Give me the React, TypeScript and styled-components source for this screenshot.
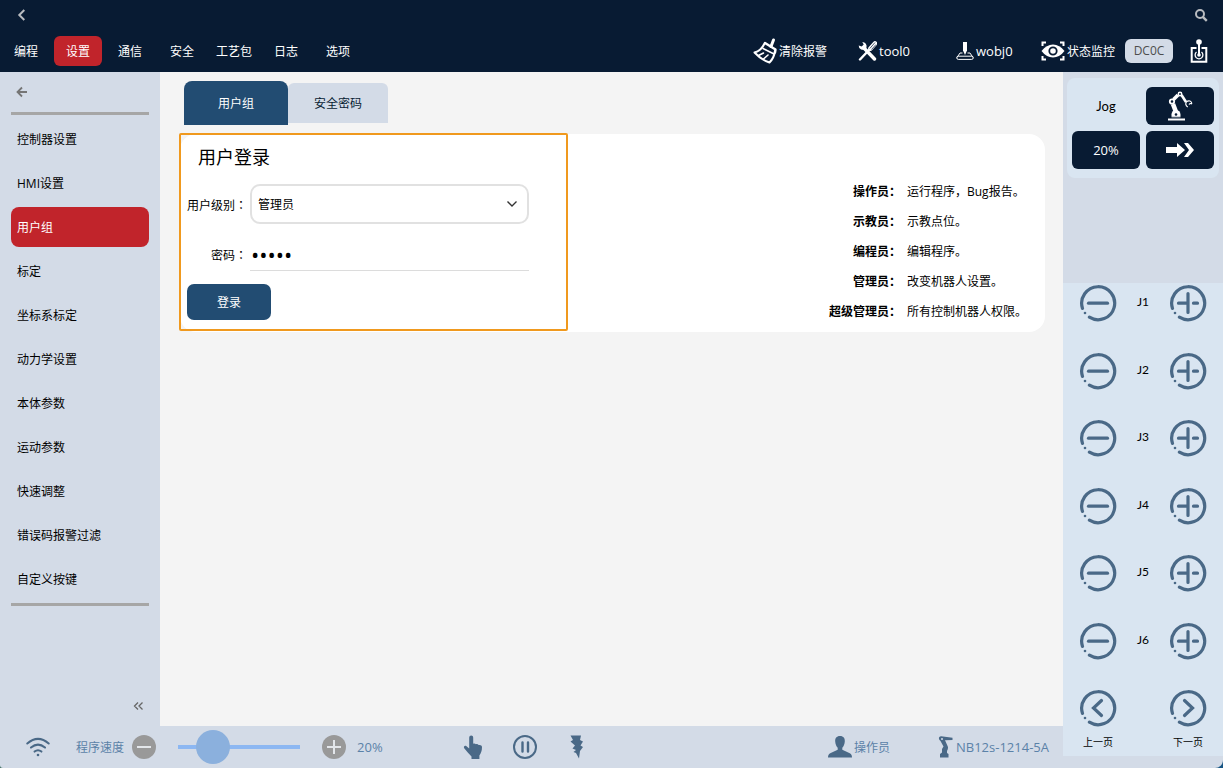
import React, { useState } from 'react';
import styled, { createGlobalStyle } from 'styled-components';

const c = {
  navy: '#081b33',
  red: '#c1242b',
  panel: '#d3dbe7',
  page: '#f4f4f4',
  light: '#d9e5f1',
  blue: '#224c72',
  icon: '#4a6987',
  soft: '#5b82a8',
  rule: '#a6a6a6',
};

const GlobalStyle = createGlobalStyle`
  *, *::before, *::after { box-sizing: border-box; }
  body {
    margin: 0;
    background: linear-gradient(90deg, #3f6f62, #175583 50%);
    font-family: "Open Sans", "Noto Sans CJK SC", sans-serif;
    font-size: 12px;
    line-height: 16px;
    color: #000;
  }
  button, input, select { font: inherit; color: inherit; margin: 0; }
  button { border: 0; padding: 0; background: none; cursor: pointer; }
  svg { display: block; flex: none; }
`;

const Shell = styled.div`
  display: flex;
  flex-direction: column;
  min-height: 100vh;
  background: ${c.panel};
  border-radius: 0 0 8px 3px;
  overflow: hidden;
`;

const Header = styled.header`
  background: ${c.navy};
  color: #fff;
  height: 72px;
`;

const TitleBar = styled.div`
  display: flex;
  justify-content: space-between;
  align-items: center;
  height: 30px;
  padding: 0 15px;
  color: #b9bcc0;
`;

const MenuBar = styled.div`
  display: flex;
  justify-content: space-between;
  align-items: center;
  height: 42px;
  padding: 0 14px 0 2px;
`;

const Menu = styled.nav`
  display: flex;
  gap: 4px;
`;

const MenuButton = styled.button<{ $active?: boolean }>`
  width: 48px;
  height: 30px;
  padding-top: 2px;
  border-radius: 6px;
  white-space: nowrap;
  background: ${p => (p.$active ? c.red : 'transparent')};
`;

const Tools = styled.div`
  display: flex;
  align-items: center;
`;

const ToolGrid = styled.div`
  display: grid;
  grid-template-columns: 105px 98px 85px 84px;
`;

const Tool = styled.button`
  display: flex;
  align-items: center;
  gap: 2px;
  height: 30px;
  white-space: nowrap;
`;

const Latin = styled.span`
  font-size: 13px;
`;

const Hanzi = styled.span`
  padding-top: 2px;
`;

const CodeButton = styled.button`
  width: 48px;
  height: 24px;
  margin-right: 16px;
  border-radius: 6px;
  background: ${c.panel};
  color: #4d4d4d;
`;

const Body = styled.div`
  display: flex;
  flex: 1;
`;

const Workspace = styled.div`
  display: flex;
  flex-direction: column;
  flex: 1;
  min-width: 0;
`;

const Columns = styled.div`
  display: flex;
  flex: 1;
`;

const Sidebar = styled.aside`
  display: flex;
  flex-direction: column;
  width: 160px;
  padding: 0 11px;
`;

const BackButton = styled.button`
  display: flex;
  align-items: center;
  height: 40px;
  padding-left: 5px;
  color: #757575;
`;

const SideList = styled.nav`
  display: flex;
  flex-direction: column;
  gap: 4px;
  padding: 4px 0;
  border-top: 3px solid ${c.rule};
  border-bottom: 3px solid ${c.rule};
`;

const SideItem = styled.button<{ $active?: boolean }>`
  height: 40px;
  padding: 2px 6px 0;
  border-radius: 8px;
  text-align: left;
  background: ${p => (p.$active ? c.red : 'transparent')};
  color: ${p => (p.$active ? '#fff' : '#000')};
`;

const CollapseButton = styled.button`
  align-self: flex-end;
  margin: auto 5px 15px 0;
  color: #666;
`;

const Main = styled.main`
  flex: 1;
  min-width: 0;
  padding: 9px 18px 0 20px;
  background: ${c.page};
`;

const Tabs = styled.div`
  display: flex;
  align-items: center;
  padding-left: 4px;
  margin-bottom: 9px;
`;

const Tab = styled.button<{ $active?: boolean }>`
  width: ${p => (p.$active ? 104 : 100)}px;
  height: ${p => (p.$active ? 44 : 40)}px;
  padding-top: 2px;
  border-radius: ${p => (p.$active ? '8px 8px 0 0' : '6px 6px 0 0')};
  background: ${p => (p.$active ? c.blue : c.panel)};
  color: ${p => (p.$active ? '#fff' : c.navy)};
`;

const Card = styled.section`
  display: flex;
  justify-content: space-between;
  height: 198px;
  border-radius: 16px;
  background: #fff;
`;

const LoginForm = styled.form`
  width: 389px;
  margin: -1px 0 1px -1px;
  padding: 10px 6px;
  border: 2px solid #f0991e;
  border-radius: 2px;
`;

const FormTitle = styled.h1`
  margin: 0 0 15px 11px;
  font-size: 18px;
  line-height: 24px;
  font-weight: 400;
`;

const Field = styled.div`
  display: grid;
  grid-template-columns: 60px 279px;
  column-gap: 3px;
  align-items: center;
  margin-bottom: 13px;
`;

const FieldLabel = styled.label`
  padding-top: 2px;
  text-align: right;
  white-space: nowrap;
`;

const Colon = styled.span`
  font-family: "Noto Sans CJK TC", sans-serif;
`;

const SelectBox = styled.div`
  display: grid;
  align-items: center;
  > * { grid-area: 1 / 1; }
  > svg { justify-self: end; margin-right: 10px; pointer-events: none; }
`;

const Select = styled.select`
  width: 100%;
  height: 40px;
  padding: 2px 6px 0;
  border: 2px solid #e1e1e1;
  border-radius: 10px;
  background: #fff;
  appearance: none;
`;

const Password = styled.input`
  width: 100%;
  height: 34px;
  padding: 0 1px;
  border: 0;
  border-bottom: 1px solid #dcdcdc;
  border-radius: 0;
  outline: 0;
  font-family: "Open Sans", sans-serif;
  font-size: 22px;
`;

const LoginButton = styled.button`
  width: 84px;
  height: 36px;
  padding-top: 2px;
  border-radius: 7px;
  background: ${c.blue};
  color: #fff;
`;

const Roles = styled.dl`
  display: grid;
  grid-template-columns: auto 120px;
  grid-auto-rows: 30px;
  column-gap: 6px;
  align-items: center;
  align-content: start;
  margin: 0;
  padding: 43px 18px 0 0;
  white-space: nowrap;
`;

const RoleName = styled.dt`
  font-weight: 700;
  text-align: right;
`;

const RoleText = styled.dd`
  margin: 0;
`;

const Footer = styled.footer`
  display: flex;
  align-items: center;
  height: 42px;
  padding: 0 14px 0 26px;
  color: ${c.soft};
  white-space: nowrap;
`;

const Speed = styled.div`
  display: flex;
  align-items: center;
`;

const SpeedLabel = styled.label`
  margin: 0 8px 0 26px;
  padding-top: 2px;
`;

const RoundButton = styled.button`
  display: flex;
  align-items: center;
  justify-content: center;
  width: 24px;
  height: 24px;
  border-radius: 50%;
  background: #999;
`;

const Slider = styled.input`
  width: 122px;
  height: 34px;
  margin: 0 22px;
  appearance: none;
  background: transparent;
  &::-webkit-slider-runnable-track {
    height: 4px;
    background: #8cb7f2;
  }
  &::-webkit-slider-thumb {
    appearance: none;
    width: 34px;
    height: 34px;
    margin-top: -15px;
    border-radius: 50%;
    background: #8bb0dd;
  }
`;

const SpeedValue = styled.output`
  margin-left: 11px;
  width: 25px;
  font-size: 13px;
`;

const Modes = styled.div`
  display: flex;
  align-items: center;
  gap: 30px;
  margin-left: 81px;
`;

const Status = styled.div`
  display: flex;
  align-items: center;
  gap: 48px;
  margin-left: auto;
`;

const StatusItem = styled.span`
  display: flex;
  align-items: center;
  gap: 2px;
`;

const JogPanel = styled.aside`
  display: flex;
  flex-direction: column;
  width: 160px;
  padding: 6px 0 12px;
`;

const JogCard = styled.div`
  display: grid;
  grid-template-columns: 1fr 1fr;
  grid-auto-rows: 38px;
  gap: 6px;
  margin: 0 4px 105px;
  padding: 9px 5px;
  border-radius: 8px;
  background: ${c.light};
`;

const JogTitle = styled.div`
  display: flex;
  align-items: center;
  justify-content: center;
  font-family: Lato, sans-serif;
  font-size: 13px;
`;

const JogButton = styled.button`
  display: flex;
  align-items: center;
  justify-content: center;
  border-radius: 6px;
  background: ${c.navy};
  color: #fff;
  font-size: 13px;
`;

const Joints = styled.div`
  display: flex;
  flex: 1;
  flex-direction: column;
  justify-content: space-between;
  padding: 1px 16px 6px;
  background: ${c.light};
`;

const Joint = styled.div`
  display: flex;
  justify-content: space-between;
  align-items: center;
`;

const JointName = styled.span`
  padding-bottom: 2px;
  font-family: Lato, sans-serif;
  font-size: 12px;
`;

const PageButton = styled.button`
  display: flex;
  flex-direction: column;
  align-items: center;
  gap: 7px;
  width: 38px;
  font-size: 10px;
  line-height: 16px;
  white-space: nowrap;
`;

const Ring = ({ d }: { d: string }) => (
  <svg width="38" height="38" viewBox="0 0 38 38" fill="none" stroke={c.icon} strokeWidth="3.2" strokeLinecap="round">
    <path d="M10.4 33.2A16.5 16.5 0 1 0 3.5 24.4" />
    <circle cx="6" cy="29" r="1.3" fill={c.icon} stroke="none" />
    <path d={d} />
  </svg>
);

const MINUS = 'M9.5 19.2h19';
const PLUS = 'M19 9.5v19M9.5 19.2h8M24.5 19.2h4';

const Chevron = () => (
  <svg width="14" height="14" viewBox="0 0 14 14" fill="none" stroke="currentColor" strokeWidth="2">
    <path d="M9.3 2L4.3 7l5 5" />
  </svg>
);

const SearchIcon = () => (
  <svg width="14" height="14" viewBox="0 0 14 14" fill="none" stroke="currentColor" strokeWidth="2">
    <circle cx="6" cy="6" r="4" />
    <path d="M8.8 8.8l4 4" strokeWidth="2.4" />
  </svg>
);

const BroomIcon = () => (
  <svg width="24" height="26" viewBox="0 0 24 26" fill="none" stroke="#fff" strokeWidth="2" strokeLinejoin="round" strokeLinecap="round">
    <path d="M20.5 2l-2.5 6.5" strokeWidth="3" />
    <path d="M12 5l10.5 6.5-.5 3" strokeWidth="2.4" />
    <path d="M11.5 5.5Q8 13 1.5 14.5Q8 21.5 16.5 24.5Q21 20 22 13" />
    <path d="M10 10.5l11 5.5" strokeWidth="1.6" />
    <path d="M5.5 17.5l5-2.5M10.5 21l4.5-4" strokeWidth="1.6" />
  </svg>
);

const ToolsIcon = () => (
  <svg width="19" height="20" viewBox="0 0 19 20" fill="none" stroke="#fff">
    <path d="M5.5 6.5l11 11.5" strokeWidth="3.4" strokeLinecap="round" />
    <path d="M.7 4.5a4.2 4.2 0 0 0 6.4 3.7l1.300-1.500A4.300 4.300 0 0 0 4.300 1l1.400 2.500-2 2z" fill="#fff" stroke="none" />
    <path d="M11 9L2 18.500" strokeWidth="2.4" strokeLinecap="round" />
    <path d="M12.5 7.5L17 2.5" strokeWidth="4.6" strokeLinecap="round" />
    <path d="M11.8 7.5L17 1.5M13.5 8.5L18 3.5" stroke={c.navy} strokeWidth=".7" />
  </svg>
);

const WobjIcon = () => (
  <svg width="18" height="20" viewBox="0 0 18 20" fill="none" stroke="#fff">
    <path d="M7 1h4v8.500L9 14 7 9.500z" fill="#fff" stroke="none" />
    <path d="M6.5 12H4L1 16.500M11.500 12H14L17 16.500" strokeWidth="1" />
    <rect x=".8" y="15.2" width="16.4" height="3.2" rx="1.5" strokeWidth="1" />
  </svg>
);

const EyeIcon = () => (
  <svg width="24" height="20" viewBox="0 0 24 20" fill="none" stroke="#fff" strokeWidth="2">
    <path d="M5 1.5H1.5V5M19 1.5h3.5V5M5 18.5H1.5V15M19 18.5h3.5V15" />
    <path d="M.5 10Q5.5 3.500 12 3.500T23.500 10Q18.500 16.500 12 16.500T.5 10z" fill="#fff" stroke="none" />
    <circle cx="12" cy="10" r="3.7" stroke={c.navy} strokeWidth="1.8" />
  </svg>
);

const JoystickIcon = () => (
  <svg width="20" height="26" viewBox="0 0 20 26" fill="none" stroke="#fff">
    <path d="M7.5 10H2.700v13.800h14.600V10h-4.800" strokeWidth="2" />
    <circle cx="10" cy="4" r="2.8" fill="#fff" stroke="none" />
    <path d="M10 4v13" strokeWidth="2" />
    <path d="M7.5 14a3.900 3.900 0 1 0 5 0" strokeWidth="1.3" />
    <circle cx="10" cy="17" r="1.8" fill="#fff" stroke="none" />
  </svg>
);

const RobotIcon = () => (
  <svg width="26" height="30" viewBox="0 0 26 30" fill="none" stroke="#fff">
    <path d="M1 28.5h17" strokeWidth="2" />
    <path d="M4.5 26.5v-3a4.5 4.5 0 0 1 9 0v3z" fill="#fff" stroke="none" />
    <path d="M8.8 20.5L6 13" strokeWidth="4.6" />
    <path d="M6.5 8.5L11 4" strokeWidth="3.6" />
    <path d="M14.5 4l4.5 7" strokeWidth="2.6" />
    <circle cx="5" cy="10.5" r="2.2" fill={c.navy} strokeWidth="1.8" />
    <circle cx="13" cy="3" r="1.7" fill={c.navy} strokeWidth="1.5" />
    <path d="M24.8 12.5c-.2-2.500-3-3.500-5-2-1.800 1.500-1.200 4.500 1 5.500M22 13.500c.5-1.200 2-1.200 3-.5" strokeWidth="1.2" />
    <circle cx="9" cy="23.5" r="1.3" fill={c.navy} stroke="none" />
    <path d="M3.5 26.2h11" stroke={c.navy} strokeWidth=".6" />
  </svg>
);

const FastIcon = () => (
  <svg width="28" height="16" viewBox="0 0 28 16" fill="#fff">
    <path d="M0 5h11V1l8 7-8 7v-4H0z" />
    <path d="M18 1h4l6 7-6 7h-4l5-7z" />
  </svg>
);

const WifiIcon = () => (
  <svg width="24" height="20" viewBox="0 0 24 20" fill="none" stroke={c.icon} strokeWidth="2" strokeLinecap="round">
    <path d="M1.3 6.5Q12-2.8 22.7 6.5M5 10.6q7-6 14 0M8.6 14.6q3.4-2.8 6.800 0" />
    <circle cx="12" cy="18" r="1.3" fill={c.icon} stroke="none" />
  </svg>
);

const HandIcon = () => (
  <svg width="20" height="24" viewBox="0 0 20 24" fill={c.icon}>
    <path d="M6.2 2.5a2 2 0 0 1 4 0v6.200c1-.5 2.200-.2 2.700.6 1-.5 2.200-.1 2.700.8 1.600-.6 3.400.3 3.400 2 0 4-1 6-2.600 8.400V24H8.500v-2.500C6 19 3.500 16 1.200 13.200c-1-1.500.6-3 2-2.200l3 2.500z" />
  </svg>
);

const PauseIcon = () => (
  <svg width="24" height="24" viewBox="0 0 24 24" fill="none" stroke={c.icon} strokeWidth="2">
    <circle cx="12" cy="12" r="11" />
    <path d="M9.5 7.5v9M15 7.5v9" strokeWidth="2.4" strokeLinecap="round" />
  </svg>
);

const BoltIcon = () => (
  <svg width="20" height="24" viewBox="0 0 20 24" fill={c.icon}>
    <path d="M3.500 .5H14L13 5l3 1.500-2.500 4 2.500 1.500-3 4L12 23.500l-3-5.500-2.500-1L9 15 5.500 13.500l2.500-3L3.500 6.500 6 5z" />
  </svg>
);

const UserIcon = () => (
  <svg width="24" height="22" viewBox="0 0 24 22" fill={c.icon}>
    <path d="M12 0c3.500 0 5 2.300 4.800 5.500-.2 3-1.300 5-2.500 6.300v2l7.500 3.400C23.500 18 24 19.500 24 21.500H0c0-2 .5-3.500 2.200-4.300l7.500-3.400v-2C8.500 10.500 7.400 8.500 7.200 5.500 7 2.300 8.500 0 12 0z" />
  </svg>
);

const ArmIcon = () => (
  <svg width="16" height="22" viewBox="0 0 16 22" fill={c.icon}>
    <path d="M1 1.500Q2-.2 5 .5l9.500 1.300V4L7 4.300 9.800 10.500Q10.500 12.500 9 15v2l1.500 1v3.500H2V18l2-1.500V13l1.500-2.500L2.500 5Q.5 3.500 1 1.500z" />
    <circle cx="4" cy="3" r="1" fill={c.panel} />
  </svg>
);

const MENU = ['编程', '设置', '通信', '安全', '工艺包', '日志', '选项'];
const SIDE = ['控制器设置', 'HMI设置', '用户组', '标定', '坐标系标定', '动力学设置', '本体参数', '运动参数', '快速调整', '错误码报警过滤', '自定义按键'];
const ROLES = [
  ['操作员：', '运行程序，Bug报告。'],
  ['示教员：', '示教点位。'],
  ['编程员：', '编辑程序。'],
  ['管理员：', '改变机器人设置。'],
  ['超级管理员：', '所有控制机器人权限。'],
];
const JOINTS = ['J1', 'J2', 'J3', 'J4', 'J5', 'J6'];

export default function App() {
  const [speed, setSpeed] = useState(20);
  const [password, setPassword] = useState('admin');
  return (
    <>
      <GlobalStyle />
      <Shell>
        <Header>
          <TitleBar>
            <button aria-label="返回"><Chevron /></button>
            <button aria-label="搜索"><SearchIcon /></button>
          </TitleBar>
          <MenuBar>
            <Menu>
              {MENU.map(m => <MenuButton key={m} $active={m === '设置'}>{m}</MenuButton>)}
            </Menu>
            <Tools>
              <ToolGrid>
                <Tool><BroomIcon /><Hanzi>清除报警</Hanzi></Tool>
                <Tool><ToolsIcon /><Latin>tool0</Latin></Tool>
                <Tool><WobjIcon /><Latin>wobj0</Latin></Tool>
                <Tool><EyeIcon /><Hanzi>状态监控</Hanzi></Tool>
              </ToolGrid>
              <CodeButton>DC0C</CodeButton>
              <button aria-label="手柄"><JoystickIcon /></button>
            </Tools>
          </MenuBar>
        </Header>
        <Body>
          <Workspace>
            <Columns>
              <Sidebar>
                <BackButton aria-label="后退">
                  <svg width="12" height="12" viewBox="0 0 12 12" fill="none" stroke="currentColor" strokeWidth="1.8">
                    <path d="M6 1.5L1.5 6 6 10.5M2 6h9" />
                  </svg>
                </BackButton>
                <SideList>
                  {SIDE.map(s => <SideItem key={s} $active={s === '用户组'}>{s}</SideItem>)}
                </SideList>
                <CollapseButton aria-label="收起">
                  <svg width="11" height="10" viewBox="0 0 11 10" fill="none" stroke="currentColor" strokeWidth="1.3">
                    <path d="M5 1.5L1.5 5 5 8.5M9.5 1.5L6 5l3.5 3.5" />
                  </svg>
                </CollapseButton>
              </Sidebar>
              <Main>
                <Tabs>
                  <Tab $active>用户组</Tab>
                  <Tab>安全密码</Tab>
                </Tabs>
                <Card>
                  <LoginForm onSubmit={e => e.preventDefault()}>
                    <FormTitle>用户登录</FormTitle>
                    <Field>
                      <FieldLabel htmlFor="level">用户级别<Colon>：</Colon></FieldLabel>
                      <SelectBox>
                        <Select id="level" defaultValue="管理员">
                          {['操作员', '示教员', '编程员', '管理员', '超级管理员'].map(o => <option key={o}>{o}</option>)}
                        </Select>
                        <svg width="14" height="14" viewBox="0 0 14 14" fill="none" stroke="#333" strokeWidth="1.4">
                          <path d="M2.5 4.5L7 9l4.5-4.5" />
                        </svg>
                      </SelectBox>
                    </Field>
                    <Field>
                      <FieldLabel htmlFor="password">密码<Colon>：</Colon></FieldLabel>
                      <Password id="password" type="password" value={password} onChange={e => setPassword(e.target.value)} />
                    </Field>
                    <LoginButton type="submit">登录</LoginButton>
                  </LoginForm>
                  <Roles>
                    {ROLES.map(([name, text]) => (
                      <React.Fragment key={name}>
                        <RoleName>{name}</RoleName>
                        <RoleText>{text}</RoleText>
                      </React.Fragment>
                    ))}
                  </Roles>
                </Card>
              </Main>
            </Columns>
            <Footer>
              <Speed>
                <WifiIcon />
                <SpeedLabel htmlFor="speed">程序速度</SpeedLabel>
                <RoundButton aria-label="减速" onClick={() => setSpeed(Math.max(0, speed - 1))}>
                  <svg width="14" height="14" viewBox="0 0 14 14" stroke="#e3e6ea" strokeWidth="2"><path d="M0 7h14" /></svg>
                </RoundButton>
                <Slider id="speed" type="range" min={0} max={100} value={speed} onChange={e => setSpeed(Number(e.target.value))} />
                <RoundButton aria-label="加速" onClick={() => setSpeed(Math.min(100, speed + 1))}>
                  <svg width="14" height="14" viewBox="0 0 14 14" stroke="#e3e6ea" strokeWidth="2"><path d="M0 7h14M7 0v14" /></svg>
                </RoundButton>
                <SpeedValue htmlFor="speed">{speed}%</SpeedValue>
              </Speed>
              <Modes>
                <button aria-label="手动"><HandIcon /></button>
                <button aria-label="暂停"><PauseIcon /></button>
                <button aria-label="上电"><BoltIcon /></button>
              </Modes>
              <Status>
                <StatusItem><UserIcon /><Hanzi>操作员</Hanzi></StatusItem>
                <StatusItem><ArmIcon /><Latin>NB12s-1214-5A</Latin></StatusItem>
              </Status>
            </Footer>
          </Workspace>
          <JogPanel>
            <JogCard>
              <JogTitle>Jog</JogTitle>
              <JogButton aria-label="机器人"><RobotIcon /></JogButton>
              <JogButton>20%</JogButton>
              <JogButton aria-label="连续运动"><FastIcon /></JogButton>
            </JogCard>
            <Joints>
              {JOINTS.map(j => (
                <Joint key={j}>
                  <button aria-label={`${j} 减`}><Ring d={MINUS} /></button>
                  <JointName>{j}</JointName>
                  <button aria-label={`${j} 加`}><Ring d={PLUS} /></button>
                </Joint>
              ))}
              <Joint>
                <PageButton><Ring d="M22.5 11.5L14.5 19l8 7.5" />上一页</PageButton>
                <PageButton><Ring d="M15.5 11.5l8 7.5-8 7.5" />下一页</PageButton>
              </Joint>
            </Joints>
          </JogPanel>
        </Body>
      </Shell>
    </>
  );
}
